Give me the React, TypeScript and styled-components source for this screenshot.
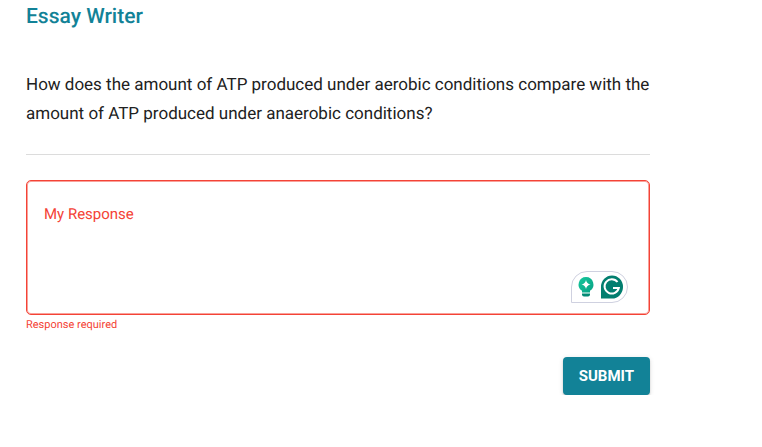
import React from "react";
import styled, { createGlobalStyle } from "styled-components";

const GlobalStyle = createGlobalStyle`
  * { box-sizing: border-box; }
  body {
    margin: 0;
    background: #fff;
    color: #212121;
    font-family: Roboto, sans-serif;
    text-rendering: geometricPrecision;
  }
`;

const Page = styled.main`
  margin: 0 112px 0 26px;
  padding-top: 3px;
`;

const Title = styled.h1`
  margin: 0 0 40px;
  font-size: 21px;
  line-height: 28px;
  font-weight: 500;
  color: #128297;
`;

const Question = styled.p`
  margin: 0;
  padding-bottom: 25px;
  font-size: 17px;
  line-height: 29px;
  border-bottom: 1px solid #dcdcdc;
`;

const Form = styled.form`
  display: flex;
  flex-direction: column;
  padding-top: 25px;
`;

const Field = styled.div`
  display: grid;
`;

const FieldLabel = styled.label`
  grid-area: 1 / 1;
  align-self: start;
  justify-self: start;
  padding: 24px 18px;
  color: #f44336;
  font-size: 15px;
  line-height: 20px;
  pointer-events: none;
`;

const ResponseBox = styled.textarea`
  grid-area: 1 / 1;
  width: 100%;
  height: 135px;
  padding: 22px 16px;
  border: 1px solid #f44336;
  border-radius: 5px;
  box-shadow: inset 0 0 0 1px #f9a19a;
  background: transparent;
  color: #212121;
  font: 400 15px/20px Roboto, sans-serif;
  resize: none;
  outline: none;
  &:focus + label, &:not(:placeholder-shown) + label { visibility: hidden; }
`;

const Assistant = styled.div`
  grid-area: 1 / 1;
  align-self: end;
  justify-self: end;
  display: flex;
  align-items: center;
  gap: 2px;
  width: 57px;
  height: 32px;
  margin: 0 22px 12px 0;
  padding: 0 2px;
  border: 1px solid #cfd1e0;
  border-radius: 16px 16px 16px 0;
  background: #fff;
`;

const AssistantButton = styled.button`
  display: flex;
  align-items: center;
  justify-content: center;
  width: 24px;
  height: 24px;
  padding: 0;
  border: 0;
  background: none;
`;

const ErrorText = styled.p`
  margin: 3px 0 0;
  font-size: 11px;
  line-height: 14px;
  color: #f44336;
`;

const Submit = styled.button`
  align-self: flex-end;
  height: 38px;
  margin-top: 25px;
  padding: 0 16px;
  border: 0;
  border-radius: 4px;
  background: #128297;
  color: #fff;
  font: 700 15px/20px Roboto, sans-serif;
  box-shadow: 0 3px 1px -2px rgba(0,0,0,.2), 0 2px 2px rgba(0,0,0,.14), 0 1px 5px rgba(0,0,0,.12);
`;

export default function App() {
  return (
    <>
      <GlobalStyle />
      <Page>
        <Title>Essay Writer</Title>
        <Question>
          How does the amount of ATP produced under aerobic conditions compare with the amount of
          ATP produced under anaerobic conditions?
        </Question>
        <Form onSubmit={(e: React.FormEvent) => e.preventDefault()}>
          <Field>
            <ResponseBox id="response" placeholder=" " aria-invalid="true" aria-describedby="response-error" />
            <FieldLabel htmlFor="response">My Response</FieldLabel>
            <Assistant>
              <AssistantButton type="button" aria-label="Writing suggestions">
                <svg width="24" height="24" viewBox="0 0 24 24">
                  <defs>
                    <linearGradient id="bulb" x1="0" y1="0" x2="1" y2="1">
                      <stop offset="0" stopColor="#16c79c" />
                      <stop offset="1" stopColor="#08a184" />
                    </linearGradient>
                  </defs>
                  <path d="M12 2a7.500 7.500 0 0 0-4 13.800v1.700h8v-1.700a7.500 7.500 0 0 0-4-13.800Z" fill="url(#bulb)" />
                  <path d="M12 5q.8 3.700 4.500 4.500-3.700.8-4.500 4.500-.8-3.700-4.500-4.500 3.700-.8 4.500-4.500Z" fill="#fff" />
                  <path d="M8 18.500h8v1q0 2-2 2h-4q-2 0-2-2Z" fill="#048a75" />
                </svg>
              </AssistantButton>
              <AssistantButton type="button" aria-label="Open writing assistant">
                <svg width="24" height="24" viewBox="0 0 24 24">
                  <path d="M12 .5a11 11.500 0 1 1 0 23H1V12A11 11.500 0 0 1 12 .5Z" fill="#027e6f" />
                  <path d="M17.500 7A7.200 7.200 0 1 0 18.800 13H13" fill="none" stroke="#fff" strokeWidth="2" />
                </svg>
              </AssistantButton>
            </Assistant>
          </Field>
          <ErrorText id="response-error">Response required</ErrorText>
          <Submit type="submit">SUBMIT</Submit>
        </Form>
      </Page>
    </>
  );
}
